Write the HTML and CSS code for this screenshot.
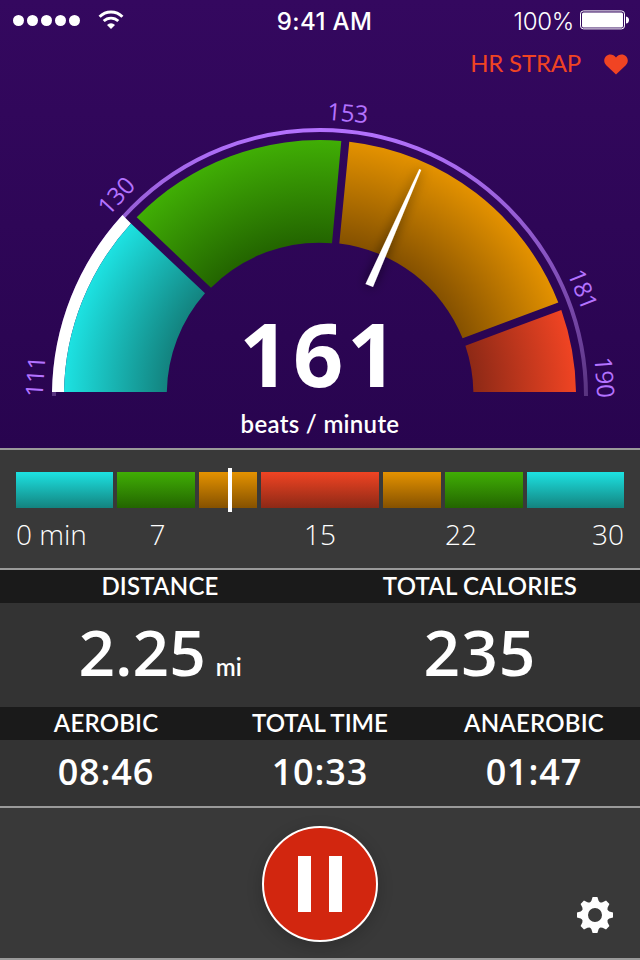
FILE: index.html
```
<!DOCTYPE html>
<html lang="en">
<head>
  <meta charset="UTF-8">
  <meta name="viewport" content="width=device-width, initial-scale=1.0">
  <title>Heart Rate Workout</title>
  <link rel="stylesheet" href="styles.css">
</head>
<body>

  <div class="heart-section">
    <div class="status-bar">
      <div class="signal">
        <span class="dot"></span><span class="dot"></span><span class="dot"></span><span class="dot"></span><span class="dot"></span>
        <svg class="wifi" width="26" height="20" viewBox="0 0 26 20">
          <g fill="none" stroke="#fff">
            <path d="M1.6 6.8 A16.2 16.2 0 0 1 24.4 6.8" stroke-width="3"/>
            <path d="M5.7 11.1 A10.4 10.4 0 0 1 20.3 11.1" stroke-width="2.8"/>
          </g>
          <path d="M13 19 L9 14.9 A5.8 5.8 0 0 1 17 14.9 Z" fill="#fff"/>
        </svg>
      </div>
      <div class="clock">9:41 AM</div>
      <div class="power">
        <span class="percent">100%</span>
        <svg class="battery" width="50" height="20" viewBox="0 0 50 20">
          <rect x="0.5" y="0.9" width="44" height="18" rx="3" fill="none" stroke="#fff"/>
          <rect x="2" y="2.4" width="41" height="15" rx="1.5" fill="#fff"/>
          <path d="M46 6.4 Q49 7 49 10 Q49 13 46 13.6 Z" fill="#fff"/>
        </svg>
      </div>
    </div>

    <div class="strap">
      <span class="strap-text">HR STRAP</span>
      <svg class="heart" width="24" height="21" viewBox="0 0 24 21">
        <path d="M12 20.5 L2.2 11.2 C-0.6 8.4 -0.2 4.4 2 2.2 C4.8 -0.6 9.6 -0.2 12 3.6 C14.4 -0.2 19.2 -0.6 22 2.2 C24.2 4.4 24.6 8.4 21.8 11.2 Z" fill="#f04423"/>
      </svg>
    </div>

    <svg class="gauge" width="640" height="310" viewBox="0 90 640 310">
      <defs>
        <radialGradient id="cyan" gradientUnits="userSpaceOnUse" cx="320" cy="396" r="256">
          <stop offset="0.6" stop-color="#13837f"/><stop offset="1" stop-color="#1de2e2"/>
        </radialGradient>
        <radialGradient id="green" gradientUnits="userSpaceOnUse" cx="320" cy="396" r="256">
          <stop offset="0.6" stop-color="#236500"/><stop offset="1" stop-color="#40ae05"/>
        </radialGradient>
        <radialGradient id="orange" gradientUnits="userSpaceOnUse" cx="320" cy="396" r="256">
          <stop offset="0.6" stop-color="#855100"/><stop offset="1" stop-color="#e49200"/>
        </radialGradient>
        <radialGradient id="red" gradientUnits="userSpaceOnUse" cx="320" cy="396" r="256">
          <stop offset="0.6" stop-color="#8d2916"/><stop offset="1" stop-color="#f04423"/>
        </radialGradient>
        <linearGradient id="ring" gradientUnits="userSpaceOnUse" x1="0" y1="128" x2="0" y2="396">
          <stop offset="0" stop-color="#b472ff"/><stop offset="1" stop-color="#58337f"/>
        </linearGradient>
        <filter id="shadow" x="-50%" y="-20%" width="200%" height="140%">
          <feDropShadow dx="0" dy="0" stdDeviation="6" flood-color="#000" flood-opacity="0.6"/>
        </filter>
      </defs>

      <!-- outer ring -->
      <path d="M54 396 A266 266 0 0 1 586 396" fill="none" stroke="url(#ring)" stroke-width="4"/>

      <!-- zones -->
      <path d="M52 392 A268 268 0 0 1 122.5 215 L131 223.5 A256 256 0 0 0 64 392 Z" fill="#fff"/>
      <path d="M64 392 A256 256 0 0 1 131 223.5 L205 293.3 A153 153 0 0 0 166.8 392 Z" fill="url(#cyan)"/>
      <path d="M136.7 217.3 A256 256 0 0 1 341.3 141 L332 243.2 A153 153 0 0 0 211 287.7 Z" fill="url(#green)"/>
      <path d="M349.3 141.7 A256 256 0 0 1 558.3 302.5 L462.6 338.3 A153 153 0 0 0 339.3 243.6 Z" fill="url(#orange)"/>
      <path d="M561.3 310 A256 256 0 0 1 576 392 L473.4 392 A153 153 0 0 0 465.4 345.7 Z" fill="url(#red)"/>

      <polygon class="needle" points="419.3,169 421.2,170 373,287 365.5,284" filter="url(#shadow)"/>

      <g class="gauge-labels">
        <text transform="translate(44 377) rotate(-86)">111</text>
        <text transform="translate(122.5 201.5) rotate(-47)">130</text>
        <text transform="translate(347 121.5) rotate(5)">153</text>
        <text transform="translate(575 292.5) rotate(68)">181</text>
        <text transform="translate(596 378) rotate(86)">190</text>
      </g>
    </svg>

    <div class="reading">
      <div class="bpm">161</div>
      <div class="bpm-unit">beats / minute</div>
    </div>
  </div>

  <div class="timeline">
    <div class="zones">
      <div class="zone cyan"></div>
      <div class="zone green"></div>
      <div class="zone orange short"></div>
      <div class="zone red"></div>
      <div class="zone orange short"></div>
      <div class="zone green"></div>
      <div class="zone cyan"></div>
      <div class="marker"></div>
    </div>
    <div class="times">
      <span class="first">0 min</span>
      <span>7</span>
      <span>15</span>
      <span>22</span>
      <span class="last">30</span>
    </div>
  </div>

  <div class="stats">
    <div class="stat-titles two">
      <div>DISTANCE</div>
      <div>TOTAL CALORIES</div>
    </div>
    <div class="stat-values big two">
      <div>2.25<span class="unit">mi</span></div>
      <div class="calories">235</div>
    </div>
    <div class="stat-titles three">
      <div>AEROBIC</div>
      <div class="total-time">TOTAL TIME</div>
      <div>ANAEROBIC</div>
    </div>
    <div class="stat-values small three">
      <div>08:46</div>
      <div>10:33</div>
      <div>01:47</div>
    </div>
  </div>

  <div class="controls">
    <button class="pause-button" aria-label="Pause">
      <span class="bar"></span>
      <span class="bar"></span>
    </button>
    <button class="settings-button" aria-label="Settings">
      <svg width="36" height="36" viewBox="-18 -18 36 36">
        <defs>
          <path id="tooth" d="M-2.4 -18 H2.4 L3.6 -14.3 Q4.5 -12.6 7 -11 H-7 Q-4.5 -12.6 -3.6 -14.3 Z"/>
        </defs>
        <circle r="10" fill="none" stroke="#fff" stroke-width="6"/>
        <g fill="#fff">
          <use href="#tooth"/>
          <use href="#tooth" transform="rotate(45)"/>
          <use href="#tooth" transform="rotate(90)"/>
          <use href="#tooth" transform="rotate(135)"/>
          <use href="#tooth" transform="rotate(180)"/>
          <use href="#tooth" transform="rotate(225)"/>
          <use href="#tooth" transform="rotate(270)"/>
          <use href="#tooth" transform="rotate(315)"/>
        </g>
      </svg>
    </button>
  </div>

</body>
</html>
```
FILE: styles.css
```
* {
  box-sizing: border-box;
}

body {
  margin: 0;
  width: 640px;
  height: 960px;
  overflow: hidden;
  display: flex;
  flex-direction: column;
  background: #393939;
  color: white;
  font-family: Lato, "Open Sans", sans-serif;
}

/* heart rate */

.heart-section {
  height: 448px;
  position: relative;
  display: flex;
  flex-direction: column;
  background: linear-gradient(#34085f, #28044f);
}

.status-bar {
  height: 40px;
  padding: 0 10px 0 13px;
  display: grid;
  grid-template-columns: 1fr auto 1fr;
  align-items: center;
  font-family: Inter, sans-serif;
}

.signal {
  display: flex;
  align-items: center;
  gap: 3px;
}

.dot {
  width: 11px;
  height: 11px;
  border-radius: 50%;
  background: white;
}

.wifi {
  margin-left: 15px;
}

.clock {
  padding: 2px 0 0 6px;
  font-size: 24px;
  font-weight: 500;
  letter-spacing: 0.4px;
}

.power {
  display: flex;
  align-items: center;
  justify-content: flex-end;
  gap: 6px;
}

.percent {
  padding-top: 2px;
  font-size: 24px;
  font-weight: 300;
  letter-spacing: -0.3px;
}

.strap {
  height: 50px;
  padding: 0 12px 2px 0;
  display: flex;
  justify-content: flex-end;
  align-items: center;
  gap: 23px;
  font-size: 24px;
  color: #f04423;
}

.strap-text {
  padding-bottom: 3px;
  letter-spacing: -0.2px;
}

.gauge {
  display: block;
}

.needle {
  fill: white;
}

.gauge-labels {
  fill: #b472ff;
  font-family: "Open Sans", sans-serif;
  font-size: 24px;
  text-anchor: middle;
}

/* sits inside the dial */
.reading {
  position: absolute;
  left: 0;
  right: 0;
  top: 309px;
  text-align: center;
}

.bpm {
  height: 88px;
  line-height: 88px;
  font-family: "Open Sans", sans-serif;
  font-size: 88px;
  font-weight: 700;
  letter-spacing: 3.5px;
}

.bpm-unit {
  margin-top: 12px;
  line-height: 30px;
  font-size: 24px;
  font-weight: 600;
  letter-spacing: 0.3px;
}

/* workout timeline */

.timeline {
  height: 120px;
  padding: 22px 16px 0;
  border-top: 2px solid #9a9a9a;
}

.zones {
  position: relative;
  display: flex;
  gap: 4px;
  height: 36px;
}

.zone {
  flex: 78 1 0;
}

.zone.short {
  flex-grow: 58;
}

.zone.cyan {
  flex-grow: 97;
  background: linear-gradient(#1de2e2, #13837f);
}

.zone.green {
  background: linear-gradient(#40ae05, #236500);
}

.zone.orange {
  background: linear-gradient(#e49200, #855100);
}

.zone.red {
  flex-grow: 119;
  background: linear-gradient(#f04423, #8d2916);
}

.marker {
  position: absolute;
  left: 212px;
  top: -4px;
  width: 4px;
  height: 44px;
  background: white;
}

.times {
  display: grid;
  grid-template-columns: 100px 83px 242px 40px 143px;
  margin-top: 8px;
  line-height: 36px;
  font-family: "Open Sans", sans-serif;
  font-size: 28px;
  font-weight: 300;
  text-align: center;
}

.times .first {
  text-align: left;
}

.times .last {
  text-align: right;
}

/* stats */

.stats {
  height: 240px;
  border-top: 2px solid #9a9a9a;
  border-bottom: 2px solid #9a9a9a;
  background: #333;
}

.two,
.three {
  display: grid;
  text-align: center;
}

.two {
  grid-template-columns: 1fr 1fr;
}

.three {
  grid-template-columns: 212px 1fr 212px;
}

.stat-titles {
  height: 33px;
  line-height: 31px;
  background: #1a1a1a;
  font-size: 24px;
  font-weight: 600;
  letter-spacing: 0.2px;
}

.total-time {
  letter-spacing: 0;
}

.stat-values {
  font-family: "Open Sans", sans-serif;
  font-weight: 600;
}

.big {
  height: 104px;
  line-height: 98px;
  font-size: 64px;
}

.calories {
  letter-spacing: 1px;
}

.unit {
  margin-left: 10px;
  font-family: Lato, sans-serif;
  font-size: 24px;
}

.small {
  height: 66px;
  line-height: 64px;
  font-size: 36px;
  letter-spacing: 0.9px;
}

/* controls */

.controls {
  height: 152px;
  padding: 18px 27px 24px;
  display: grid;
  grid-template-columns: 1fr 116px 1fr;
  border-bottom: 2px solid #9a9a9a;
}

.pause-button {
  grid-column: 2;
  width: 116px;
  height: 116px;
  padding: 0;
  display: flex;
  justify-content: center;
  align-items: center;
  gap: 18px;
  background: #d2260f;
  border: 2px solid white;
  border-radius: 50%;
  box-shadow: 0 4px 16px rgba(0, 0, 0, 0.2);
  cursor: pointer;
}

.bar {
  width: 13px;
  height: 56px;
  background: white;
}

.settings-button {
  justify-self: end;
  align-self: end;
  margin-bottom: 1px;
  padding: 0 0 8px;
  background: none;
  border: none;
  cursor: pointer;
}

.settings-button svg {
  display: block;
}
```
